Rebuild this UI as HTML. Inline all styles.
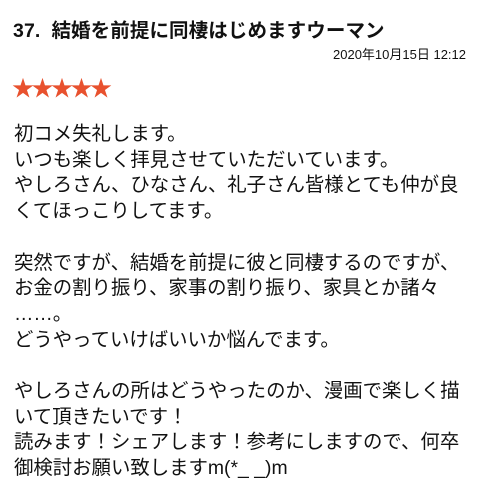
<!DOCTYPE html>
<html><head><meta charset="utf-8"><style>
body{margin:0;width:480px;height:502px;background:#fff;overflow:hidden;font-family:"Liberation Sans","Noto Sans CJK JP",sans-serif;color:#111}
.t{position:absolute;left:13px;top:14px;font-size:19.5px;font-weight:bold;white-space:nowrap;letter-spacing:0.1px}
.d{position:absolute;right:14px;top:44px;font-size:13px;white-space:nowrap}
.s{position:absolute;left:12px;top:79px;font-size:22px;color:#e8512e;letter-spacing:-2.5px;line-height:20px}
.b{position:absolute;left:14px;top:122px;font-size:19.4px;line-height:25.7px;white-space:nowrap}
</style></head><body>
<div class="t">37.&nbsp; 結婚を前提に同棲はじめますウーマン</div>
<div class="d">2020年10月15日 12:12</div>
<div class="s">★★★★★</div>
<div class="b">初コメ失礼します。<br>いつも楽しく拝見させていただいています。<br>やしろさん、ひなさん、礼子さん皆様とても仲が良<br>くてほっこりしてます。<br><br>突然ですが、結婚を前提に彼と同棲するのですが、<br>お金の割り振り、家事の割り振り、家具とか諸々<br>……。<br>どうやっていけばいいか悩んでます。<br><br>やしろさんの所はどうやったのか、漫画で楽しく描<br>いて頂きたいです！<br>読みます！シェアします！参考にしますので、何卒<br>御検討お願い致しますm(*_ _)m</div>
</body></html>
